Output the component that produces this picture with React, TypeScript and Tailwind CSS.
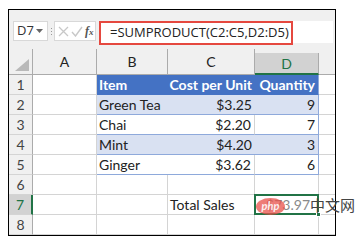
const rows = [
  { n: 1, b: 'Item', c: 'Cost per Unit', d: 'Quantity', kind: 'head' },
  { n: 2, b: 'Green Tea', c: '$3.25', d: '9', kind: 'band' },
  { n: 3, b: 'Chai', c: '$2.20', d: '7', kind: 'plain' },
  { n: 4, b: 'Mint', c: '$4.20', d: '3', kind: 'band' },
  { n: 5, b: 'Ginger', c: '$3.62', d: '6', kind: 'plain' },
];

const cols = ['A', 'B', 'C', 'D'];

export default function App() {
  return (
    <div className="relative w-[355px] h-[242px] bg-white pl-[8px] pt-[9px] overflow-hidden" style={{ fontFamily: 'Lato, "Open Sans", sans-serif' }}>
      <div className="w-[328px] h-[227px] border border-black bg-[#f0f0f0] flex flex-col overflow-hidden">
        {/* formula bar */}
        <div className="h-[39px] flex items-start pt-[11px] pl-[4px]" style={{ fontFamily: '"Open Sans", sans-serif' }}>
          <div className="w-[35px] h-[20px] bg-white border border-[#d8d8d8] flex items-center pl-[3px] text-[13px] text-[#333]">
            D7
            <svg width="7" height="5" viewBox="0 0 7 5" className="ml-[2px]"><path d="M0 0h7L3.5 4z" fill="#666" /></svg>
          </div>
          <div className="w-[4px] mx-[1px] h-[20px] flex flex-col items-center justify-center gap-[2px]">
            <span className="w-[1px] h-[1px] bg-[#999]" />
            <span className="w-[1px] h-[1px] bg-[#999]" />
            <span className="w-[1px] h-[1px] bg-[#999]" />
          </div>
          <div className="w-[42px] h-[20px] bg-white border border-[#d8d8d8] flex items-center pl-[3px] gap-[2px]">
            <svg width="11" height="11" viewBox="0 0 11 11"><path d="M1 1l9 9M10 1l-9 9" stroke="#c8c8c8" strokeWidth="1.3" fill="none" /></svg>
            <svg width="12" height="11" viewBox="0 0 12 11"><path d="M1 6l3.5 4L11 1" stroke="#c8c8c8" strokeWidth="1.4" fill="none" /></svg>
            <span className="text-[12px] italic font-bold text-[#555] leading-none" style={{ fontFamily: '"Liberation Serif", serif' }}>f<span className="text-[9px]">x</span></span>
          </div>
          <div className="ml-[3px] flex-1 h-[22px] bg-white mr-[2px]">
            <div className="w-[194px] h-[24px] border-2 border-[#e5483f] flex items-center pl-[9px] text-[13px] text-[#222]">
              =SUMPRODUCT(C2:C5,D2:D5)
            </div>
          </div>
        </div>

        {/* grid */}
        <div className="grid grid-cols-[24px_64px_71px_87px_64px_16px] grid-rows-[26px_repeat(8,20px)] text-[14px] text-[#222]">
          <div className="bg-[#f0f0f0] border-r border-b border-[#ababab] flex items-end justify-end pr-[3px] pb-[3px]">
            <svg width="14" height="12" viewBox="0 0 14 12"><path d="M14 0v12H0z" fill="#b9b9b9" /></svg>
          </div>
          {cols.map((c) => (
            <div key={c} className={`flex items-center justify-center border-r border-[#ababab] ${c === 'D' ? 'bg-[#d2d2d2] border-b-2 border-b-[#217346] text-[#217346] mt-[4px]' : 'bg-[#f0f0f0] border-b'}`}>
              {c}
            </div>
          ))}
          <div className="bg-[#f0f0f0] border-b border-[#ababab]" />

          {rows.map((r) => (
            <Row key={r.n} r={r} />
          ))}

          <Header n={6} />
          <Blank /><Blank /><Blank /><Blank /><Blank last />

          <div className="bg-[#d2d2d2] border-r-2 border-r-[#217346] border-b border-b-[#d4d4d4] flex items-center justify-center text-[#217346]">7</div>
          <Blank />
          <Blank />
          <div className="bg-white border-r border-b border-[#d4d4d4] flex items-center pl-[2px] whitespace-nowrap">Total Sales</div>
          <div className="relative bg-white border-2 border-[#217346] -ml-[1px] -mt-[1px] flex items-center justify-end pr-[7px] text-[#8a8a8a]">
            $73.97
            <span className="absolute right-[-4px] bottom-[-4px] w-[5px] h-[5px] bg-[#217346] border border-white" />
          </div>
          <Blank last />

          <Header n={8} />
          <Blank /><Blank /><Blank /><Blank /><Blank last />
        </div>
      </div>

      {/* watermark over the total */}
      <div className="absolute z-10 left-[256px] top-[198px] w-[29px] h-[17px] rounded-[50%] bg-[#e8504a]/75 flex items-center justify-center text-white/90 text-[11px] font-bold italic pointer-events-none">php</div>
      <div className="absolute z-10 left-[310px] top-[194px] w-[45px] whitespace-nowrap text-[15px] leading-[22px] text-[#444] pointer-events-none" style={{ fontFamily: '"Noto Sans CJK SC", sans-serif' }}>中文网</div>
    </div>
  );
}

function Header({ n }: { n: number }) {
  return (
    <div className="bg-[#f0f0f0] border-r border-b border-[#d4d4d4] border-r-[#ababab] flex items-center justify-center text-[#444]">{n}</div>
  );
}

function Blank({ last }: { last?: boolean }) {
  return <div className={`bg-white border-b border-[#d4d4d4] ${last ? '' : 'border-r'}`} />;
}

function Row({ r }: { r: { n: number; b: string; c: string; d: string; kind: string } }) {
  const fill =
    r.kind === 'head' ? 'bg-[#4472c4] text-white font-bold' : r.kind === 'band' ? 'bg-[#d9e1f2]' : 'bg-white';
  const line = r.kind === 'head' ? 'border-b border-[#4472c4]' : 'border-b border-[#8ea9db]';
  return (
    <>
      <Header n={r.n} />
      <Blank />
      <div className={`${fill} ${line} flex items-center pl-[2px] whitespace-nowrap`}>{r.b}</div>
      <div className={`${fill} ${line} ${r.kind === 'plain' ? 'border-r border-r-[#d4d4d4]' : ''} flex items-center justify-end pr-[3px] whitespace-nowrap`}>{r.c}</div>
      <div className={`${fill} ${line} border-r border-r-[#8ea9db] flex items-center justify-end pr-[3px] whitespace-nowrap`}>{r.d}</div>
      <Blank last />
    </>
  );
}
